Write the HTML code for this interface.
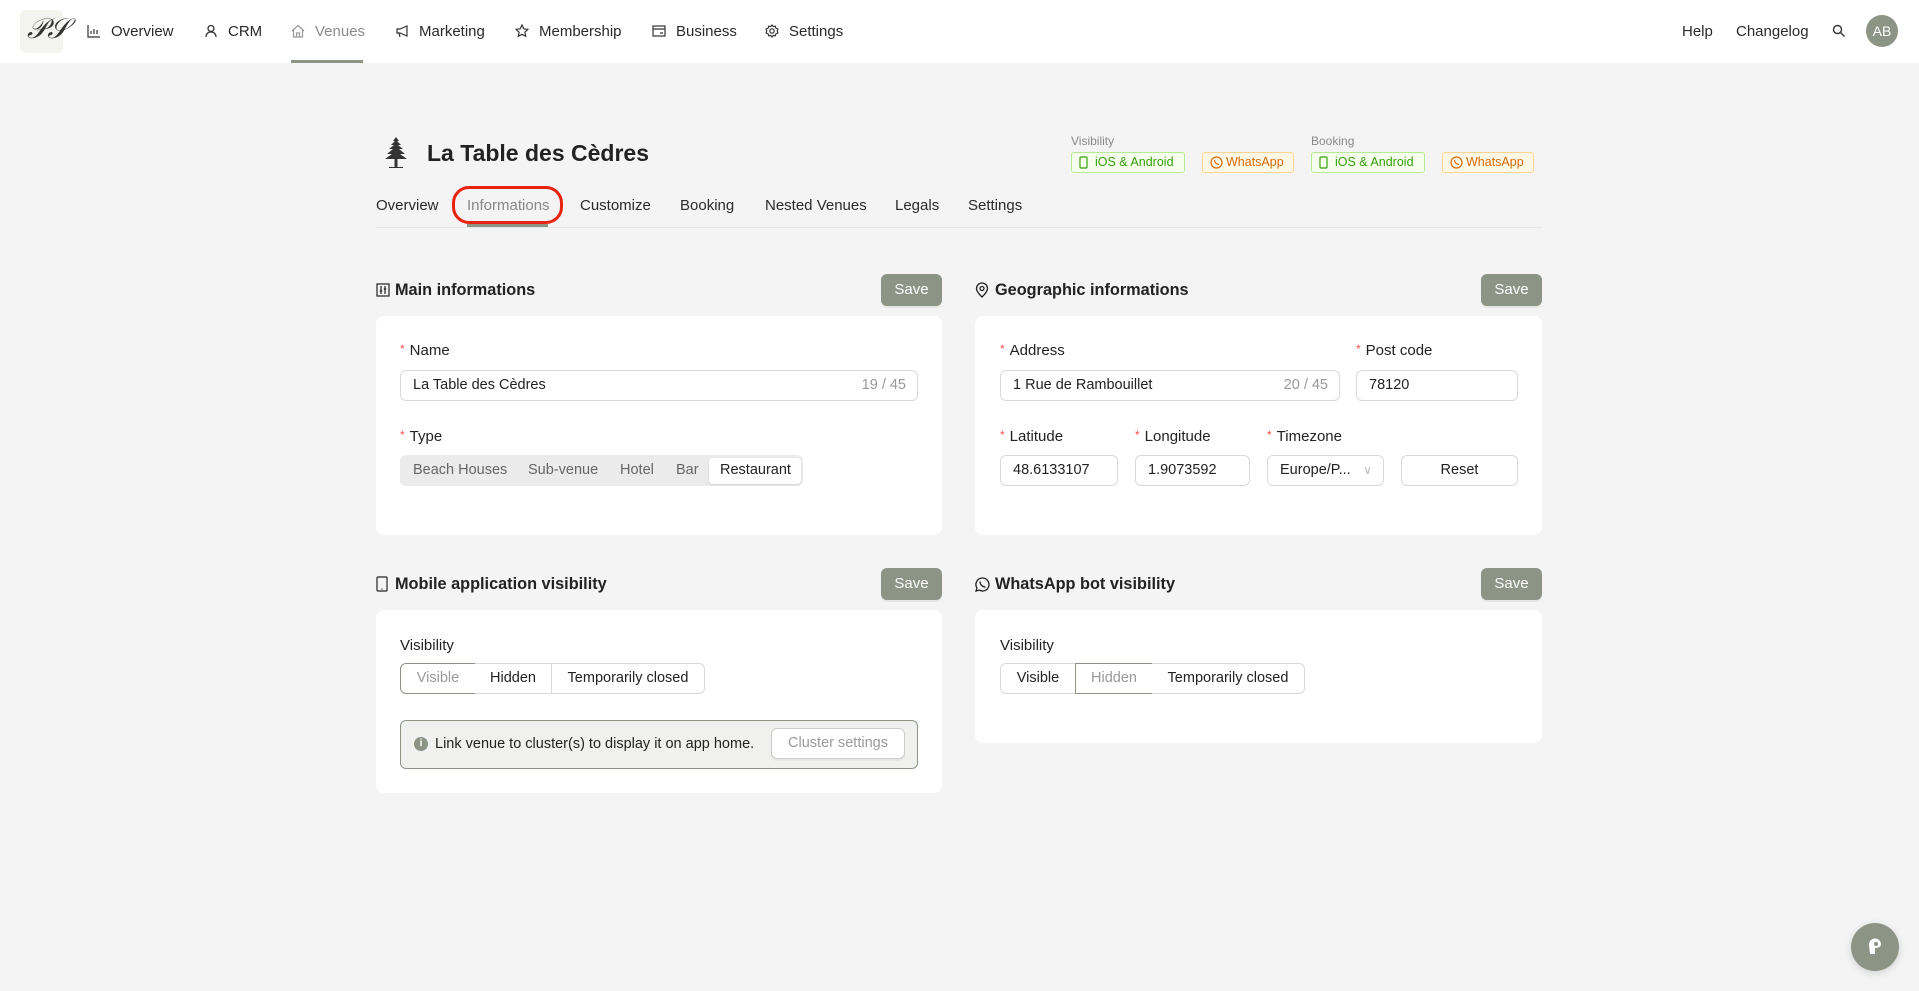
<!DOCTYPE html>
<html><head><meta charset="utf-8">
<style>
*{box-sizing:border-box;margin:0;padding:0}
body{width:1919px;height:991px;background:#f4f4f4;font-family:"Liberation Sans",sans-serif;color:#222;position:relative;overflow:hidden;font-size:15px}
.a{position:absolute}
.hdr{left:0;top:0;width:1919px;height:63px;background:#fff}
.nav{top:23px;font-size:15px;color:#2a2a2a;white-space:nowrap}
.nav svg{position:absolute;left:-24px;top:1px}
.card{background:#fff;border-radius:8px}
.save{background:#8c9585;color:#fff;border-radius:6px;width:61px;height:32px;text-align:center;line-height:32px;font-size:15px;box-shadow:0 2px 0 rgba(0,0,0,.06)}
.st{font-size:16.3px;font-weight:bold;color:#222}
.lbl{font-size:15px;color:#222}
.lbl b{color:#ff4d4f;font-weight:normal;font-size:12px;margin-right:5px;vertical-align:2px}
.inp{border:1px solid #d9d9d9;border-radius:6px;height:31px;line-height:29px;padding-left:12px;font-size:14.5px;background:#fff}
.cnt{position:absolute;right:11px;top:0;color:#999}
.badge{height:21px;border-radius:3px;font-size:12.5px;line-height:19px;padding-left:23px}
.g{border:1px solid #b7eb8f;background:#f6ffed;color:#389e0d}
.o{border:1px solid #ffd591;background:#fff7e6;color:#d46b08}
.badge svg{position:absolute;left:7px;top:3px}
.tab{top:197px;font-size:15px;color:#2a2a2a}
.seg{border:1px solid #d9d9d9;height:31px;line-height:29px;text-align:center;font-size:14.5px;background:#fff}
</style></head><body>
<div class="a hdr"></div>
<div class="a" style="left:20px;top:10px;width:43px;height:43px;background:#f4f4ee;border-radius:6px"></div>
<div class="a" style="left:27px;top:14px;font-family:'Liberation Serif',serif;font-style:italic;font-size:28px;color:#333">𝒫𝒮</div>

<div class="a nav" style="left:111px"><svg width="14" height="14" viewBox="0 0 14 14" fill="none" stroke="#333" stroke-width="1.2"><path d="M1 1v12h12M4 10V7M7 10V5M10 10V6"/></svg>Overview</div>
<div class="a nav" style="left:228px"><svg width="14" height="14" viewBox="0 0 14 14" fill="none" stroke="#333" stroke-width="1.3"><circle cx="7" cy="4.5" r="3"/><path d="M2 13c0-3 2-5 5-5s5 2 5 5"/></svg>CRM</div>
<div class="a nav" style="left:315px;color:#8a8a8a"><svg width="14" height="14" viewBox="0 0 14 14" fill="none" stroke="#999" stroke-width="1.2"><path d="M1 7L7 1.5 13 7M2.5 6v7h9V6M5.5 13V9h3v4"/></svg>Venues</div>
<div class="a" style="left:291px;top:60px;width:72px;height:3px;background:#8c9585"></div>
<div class="a nav" style="left:419px"><svg width="14" height="14" viewBox="0 0 14 14" fill="none" stroke="#333" stroke-width="1.2"><path d="M2 5h3l7-3v10L5 9H2zM4 9l1 4"/></svg>Marketing</div>
<div class="a nav" style="left:539px"><svg width="14" height="14" viewBox="0 0 14 14" fill="none" stroke="#333" stroke-width="1.2"><path d="M7 1l1.8 3.8 4.2.5-3.1 2.9.8 4.1L7 10.3 3.3 12.3l.8-4.1L1 5.3l4.2-.5z"/></svg>Membership</div>
<div class="a nav" style="left:676px"><svg width="14" height="14" viewBox="0 0 14 14" fill="none" stroke="#333" stroke-width="1.2"><rect x="1" y="2" width="12" height="10"/><path d="M1 5h12M8 9h3"/></svg>Business</div>
<div class="a nav" style="left:789px"><svg width="14" height="14" viewBox="0 0 14 14" fill="none" stroke="#333" stroke-width="1.2"><circle cx="7" cy="7" r="2.2"/><path d="M7 1l1.3 1.6 2-.4.6 2 2 .8-.6 2 .6 2-2 .8-.6 2-2-.4L7 13l-1.3-1.6-2 .4-.6-2-2-.8.6-2-.6-2 2-.8.6-2 2 .4z"/></svg>Settings</div>

<div class="a nav" style="left:1682px">Help</div>
<div class="a nav" style="left:1736px">Changelog</div>
<svg class="a" style="left:1832px;top:24px" width="14" height="14" viewBox="0 0 14 14" fill="none" stroke="#333" stroke-width="1.4"><circle cx="5.5" cy="5.5" r="4"/><path d="M8.5 8.5L12.5 12.5"/></svg>
<div class="a" style="left:1866px;top:15px;width:32px;height:32px;border-radius:50%;background:#8c9585;color:#fff;text-align:center;line-height:32px;font-size:14px">AB</div>

<svg class="a" style="left:379px;top:136px" width="34" height="34" viewBox="0 0 34 34" fill="#333"><path d="M17 1l3 4h-2l4 4h-3l5 4h-4l6 5h-5l7 5H6l7-5H8l6-5h-4l5-4h-3l4-4h-2z"/><rect x="15.5" y="23" width="3" height="8"/><path d="M10 31h14v1H10z"/></svg>
<div class="a" style="left:427px;top:140px;font-size:23px;font-weight:bold;color:#222">La Table des Cèdres</div>

<div class="a" style="left:1071px;top:134px;font-size:12px;color:#888">Visibility</div>
<div class="a" style="left:1311px;top:134px;font-size:12px;color:#888">Booking</div>
<div class="a badge g" style="left:1071px;top:152px;width:114px"><svg width="9" height="13" viewBox="0 0 9 13" fill="none" stroke="#389e0d" stroke-width="1.2"><rect x="1" y="1" width="7" height="11" rx="1"/></svg>iOS &amp; Android</div>
<div class="a badge o" style="left:1202px;top:152px;width:92px"><svg width="13" height="13" viewBox="0 0 13 13" fill="none" stroke="#d46b08" stroke-width="1.2"><circle cx="6.5" cy="6.5" r="5.5"/><path d="M4.5 4c0 2.5 2 4.5 4.5 4.5"/></svg>WhatsApp</div>
<div class="a badge g" style="left:1311px;top:152px;width:114px"><svg width="9" height="13" viewBox="0 0 9 13" fill="none" stroke="#389e0d" stroke-width="1.2"><rect x="1" y="1" width="7" height="11" rx="1"/></svg>iOS &amp; Android</div>
<div class="a badge o" style="left:1442px;top:152px;width:92px"><svg width="13" height="13" viewBox="0 0 13 13" fill="none" stroke="#d46b08" stroke-width="1.2"><circle cx="6.5" cy="6.5" r="5.5"/><path d="M4.5 4c0 2.5 2 4.5 4.5 4.5"/></svg>WhatsApp</div>

<div class="a tab" style="left:376px">Overview</div>
<div class="a tab" style="left:467px;color:#888">Informations</div>
<div class="a tab" style="left:580px">Customize</div>
<div class="a tab" style="left:680px">Booking</div>
<div class="a tab" style="left:765px">Nested Venues</div>
<div class="a tab" style="left:895px">Legals</div>
<div class="a tab" style="left:968px">Settings</div>
<div class="a" style="left:376px;top:227px;width:1166px;height:1px;background:#e6e6e6"></div>
<div class="a" style="left:467px;top:224px;width:81px;height:3px;background:#8c9585"></div>
<div class="a" style="left:452px;top:186px;width:111px;height:38px;border:3px solid #e8240f;border-radius:17px"></div>

<svg class="a" style="left:376px;top:283px" width="14" height="14" viewBox="0 0 14 14" fill="none" stroke="#222" stroke-width="1.2"><rect x="1" y="1" width="12" height="12"/><path d="M5 3v8M9 3v8M3.8 8h2.4M7.8 6h2.4"/></svg>
<div class="a st" style="left:395px;top:281px">Main informations</div>
<div class="a save" style="left:881px;top:274px">Save</div>
<div class="a card" style="left:376px;top:316px;width:566px;height:219px"></div>
<div class="a lbl" style="left:400px;top:342px"><b>*</b>Name</div>
<div class="a inp" style="left:400px;top:370px;width:518px">La Table des Cèdres<span class="cnt">19 / 45</span></div>
<div class="a lbl" style="left:400px;top:428px"><b>*</b>Type</div>
<div class="a" style="left:400px;top:455px;width:403px;height:31px;background:#ebebeb;border-radius:6px"></div>
<div class="a" style="left:709px;top:458px;width:92px;height:26px;background:#fff;border-radius:4px;box-shadow:0 1px 2px rgba(0,0,0,.1)"></div>
<div class="a" style="left:413px;top:462px;font-size:14.5px;color:#666">Beach Houses</div>
<div class="a" style="left:528px;top:462px;font-size:14.5px;color:#666">Sub-venue</div>
<div class="a" style="left:620px;top:462px;font-size:14.5px;color:#666">Hotel</div>
<div class="a" style="left:676px;top:462px;font-size:14.5px;color:#666">Bar</div>
<div class="a" style="left:720px;top:462px;font-size:14.5px;color:#222">Restaurant</div>

<svg class="a" style="left:975px;top:282px" width="14" height="16" viewBox="0 0 14 16" fill="none" stroke="#222" stroke-width="1.3"><path d="M7 15s5.5-5 5.5-8.5a5.5 5.5 0 0 0-11 0C1.5 10 7 15 7 15z"/><circle cx="7" cy="6.5" r="2"/></svg>
<div class="a st" style="left:995px;top:281px">Geographic informations</div>
<div class="a save" style="left:1481px;top:274px">Save</div>
<div class="a card" style="left:975px;top:316px;width:567px;height:219px"></div>
<div class="a lbl" style="left:1000px;top:342px"><b>*</b>Address</div>
<div class="a inp" style="left:1000px;top:370px;width:340px">1 Rue de Rambouillet<span class="cnt">20 / 45</span></div>
<div class="a lbl" style="left:1356px;top:342px"><b>*</b>Post code</div>
<div class="a inp" style="left:1356px;top:370px;width:162px">78120</div>
<div class="a lbl" style="left:1000px;top:428px"><b>*</b>Latitude</div>
<div class="a lbl" style="left:1135px;top:428px"><b>*</b>Longitude</div>
<div class="a lbl" style="left:1267px;top:428px"><b>*</b>Timezone</div>
<div class="a inp" style="left:1000px;top:455px;width:118px">48.6133107</div>
<div class="a inp" style="left:1135px;top:455px;width:115px">1.9073592</div>
<div class="a inp" style="left:1267px;top:455px;width:117px">Europe/P...<span class="cnt" style="color:#bbb;font-size:12px">∨</span></div>
<div class="a inp" style="left:1401px;top:455px;width:117px;padding:0;text-align:center">Reset</div>

<svg class="a" style="left:376px;top:576px" width="12" height="16" viewBox="0 0 12 16" fill="none" stroke="#222" stroke-width="1.2"><rect x="1" y="1" width="10" height="14" rx="1"/><path d="M5.5 13h1"/></svg>
<div class="a st" style="left:395px;top:575px">Mobile application visibility</div>
<div class="a save" style="left:881px;top:568px">Save</div>
<div class="a card" style="left:376px;top:610px;width:566px;height:183px"></div>
<div class="a lbl" style="left:400px;top:637px">Visibility</div>
<div class="a seg" style="left:400px;top:663px;width:76px;border-color:#8c9585;color:#999;border-radius:6px 0 0 6px">Visible</div>
<div class="a seg" style="left:475px;top:663px;width:77px;border-left:none">Hidden</div>
<div class="a seg" style="left:551px;top:663px;width:154px;border-radius:0 6px 6px 0">Temporarily closed</div>
<div class="a" style="left:400px;top:720px;width:518px;height:49px;background:#f0f1ee;border:1px solid #8c9585;border-radius:6px"></div>
<div class="a" style="left:414px;top:737px;width:14px;height:14px;border-radius:50%;background:#8c9585;color:#fff;font-size:10px;text-align:center;line-height:14px;font-weight:bold">i</div>
<div class="a" style="left:435px;top:736px;font-size:14.5px">Link venue to cluster(s) to display it on app home.</div>
<div class="a" style="left:771px;top:728px;width:134px;height:31px;background:#fff;border:1px solid #ccc;border-radius:6px;text-align:center;line-height:29px;color:#999;font-size:14.5px;box-shadow:0 2px 0 rgba(0,0,0,.04)">Cluster settings</div>

<svg class="a" style="left:975px;top:577px" width="15" height="15" viewBox="0 0 15 15" fill="none" stroke="#222" stroke-width="1.3"><path d="M7.5 1a6.5 6.5 0 1 1-3.3 12.1L1 14l.9-3.1A6.5 6.5 0 0 1 7.5 1z"/><path d="M5 4.5c0 3 2.5 5.5 5.5 5.5"/></svg>
<div class="a st" style="left:995px;top:575px">WhatsApp bot visibility</div>
<div class="a save" style="left:1481px;top:568px">Save</div>
<div class="a card" style="left:975px;top:610px;width:567px;height:133px"></div>
<div class="a lbl" style="left:1000px;top:637px">Visibility</div>
<div class="a seg" style="left:1000px;top:663px;width:76px;border-radius:6px 0 0 6px">Visible</div>
<div class="a seg" style="left:1075px;top:663px;width:78px;border-color:#8c9585;color:#999">Hidden</div>
<div class="a seg" style="left:1152px;top:663px;width:153px;border-left:none;border-radius:0 6px 6px 0">Temporarily closed</div>

<div class="a" style="left:1851px;top:923px;width:48px;height:48px;border-radius:50%;background:#8c9585;box-shadow:0 2px 8px rgba(0,0,0,.15)"></div>
<svg class="a" style="left:1865px;top:936px" width="20" height="22" viewBox="0 0 20 22"><path d="M4 9a6 6 0 0 1 12-1c0 3-3 4-6 4v6H5z" fill="#fff"/><circle cx="11" cy="8" r="2" fill="#8c9585"/></svg>
</body></html>
